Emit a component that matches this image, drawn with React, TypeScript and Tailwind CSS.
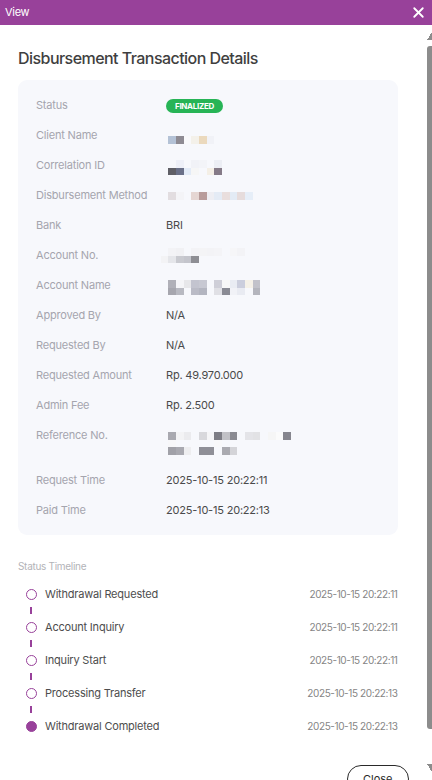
import { X } from "lucide-react";

type Cell = string;

// pixelated redaction blocks, each row is a list of bg classes ("" = empty)
function Mosaic({ rows, offset }: { rows: Cell[][]; offset: string }) {
  return (
    <div className={`-ml-[5.3px] flex flex-col ${offset}`}>
      {rows.map((row, i) => (
        <div key={i} className="flex h-[7.67px]">
          {row.map((c, j) => (
            <span key={j} className={`h-[7.67px] w-[7.67px] shrink-0 ${c}`} />
          ))}
        </div>
      ))}
    </div>
  );
}

const clientName: Cell[][] = [
  ["", "bg-[#b4c2d6]", "bg-[#8e8b93]", "bg-[#f9f9fb]", "bg-[#f4f1ea]", "bg-[#ebd9bd]", "bg-[#f1f2f7]"],
];

const correlationId: Cell[][] = [
  ["", "", "bg-[#eef0f8]", "", "bg-[#f1f2f7]", "bg-[#f3f4f8]", "", "bg-[#eceef4]"],
  ["", "bg-[#5f5f66]", "bg-[#6a7088]", "bg-[#e3ebf7]", "bg-[#f6f6f6]", "", "bg-[#f4efe6]", "bg-[#857a87]"],
];

const disbMethod: Cell[][] = [
  ["", "bg-[#e2dde0]", "bg-[#f4f4f7]", "", "bg-[#e5d6d3]", "bg-[#b89c9b]", "bg-[#eeeef3]", "bg-[#e4ebf5]", "bg-[#e9dedd]", "bg-[#e3ebf5]", "bg-[#e6dcdc]", "bg-[#e6eef8]"],
];

const accountNo: Cell[][] = [
  ["", "bg-[#f3f3f6]", "bg-[#f1f1f4]", "", "bg-[#f3f3f6]", "bg-[#f4f4f6]", "bg-[#f3f3f6]", "bg-[#f4f4f7]", "", "bg-[#f6f6f8]", "bg-[#f3f3f6]"],
  ["bg-[#f3f3f5]", "bg-[#e5e6ea]", "bg-[#c9cad0]", "bg-[#c4c5cc]", "bg-[#8e8e94]"],
];

const accountName: Cell[][] = [
  ["", "bg-[#b0b0b8]", "bg-[#f5f5f8]", "bg-[#e7e7ea]", "bg-[#c3c4cf]", "bg-[#c7c8d2]", "", "bg-[#cfcfd8]", "bg-[#f8f8f8]", "bg-[#e9ecf3]", "bg-[#cbcedd]", "bg-[#f5f1e8]", "bg-[#c2c2ca]"],
  ["", "bg-[#a6a6ae]", "bg-[#b8b9c1]", "", "bg-[#babbc6]", "bg-[#b3b5c0]", "", "bg-[#e0e0e5]", "bg-[#8a8b94]", "bg-[#f1f2f7]", "bg-[#e9ebf2]", "", "bg-[#b4b5bd]"],
];

const referenceNo: Cell[][] = [
  ["", "bg-[#a9a9b0]", "bg-[#f3f3f5]", "bg-[#ebebee]", "", "bg-[#d8d8dc]", "bg-[#f5f5f7]", "bg-[#7d7d85]", "bg-[#c1c1c6]", "bg-[#8a8a92]", "", "bg-[#e4e4e8]", "bg-[#e2e2e5]", "", "bg-[#f6f6f6]", "bg-[#fbfbfb]", "bg-[#86868e]"],
  ["", "bg-[#f7f7f9]", "", "", "", "", "", "bg-[#f8f8fa]", "", "", "", "", "", "", "", "", ""],
  ["", "bg-[#a1a1a8]", "bg-[#a9a9b0]", "bg-[#eeeef0]", "", "bg-[#8f8f97]", "bg-[#8f8f97]", "", "bg-[#aaaab0]", "bg-[#d4d4d8]"],
];

function Row({ label, children, tall }: { label: string; children: React.ReactNode; tall?: boolean }) {
  return (
    <div className={`flex ${tall ? "h-[30px]" : "h-[15px]"}`}>
      <div className="w-[130px] shrink-0 leading-[15px] text-[#a5a5ae]">{label}</div>
      <div className="flex-1 leading-[15px] text-[#4a4a4a]">{children}</div>
    </div>
  );
}

const timeline = [
  { label: "Withdrawal Requested", time: "2025-10-15 20:22:11" },
  { label: "Account Inquiry", time: "2025-10-15 20:22:11" },
  { label: "Inquiry Start", time: "2025-10-15 20:22:11" },
  { label: "Processing Transfer", time: "2025-10-15 20:22:13" },
  { label: "Withdrawal Completed", time: "2025-10-15 20:22:13", done: true },
];

function Scrollbar() {
  return (
    <div className="flex w-[5.5px] shrink-0 flex-col">
      <span className="mt-[7px] h-[8px] w-full bg-[linear-gradient(to_bottom_right,transparent_50%,#8c8c8c_50%)]" />
      <span className="mt-[6px] h-[683px] w-full rounded-tl-[3px] rounded-bl-[3px] bg-[#8c8c8c]" />
      <span className="mt-[35px] h-[8px] w-full bg-[linear-gradient(to_top_right,transparent_50%,#8c8c8c_50%)]" />
    </div>
  );
}

export default function App() {
  return (
    <div className="flex h-[780px] w-[432px] flex-col overflow-hidden bg-white font-['Inter',sans-serif]">
      <div className="flex h-[25px] shrink-0 items-center justify-between bg-[#98419a] pl-[5px] pr-[5px] text-white">
        <span className="text-[11px] leading-none tracking-[-0.3px]">View</span>
        <X className="h-[17px] w-[17px]" strokeWidth={2.6} />
      </div>

      <div className="flex min-h-0 flex-1">
        <div className="min-w-0 flex-1 overflow-hidden">
          <div className="pl-[18px] pr-[29px] pt-[21px]">
            <h1 className="text-[16px] font-medium leading-[24px] tracking-[-0.55px] text-[#3f3f3f]">
              Disbursement Transaction Details
            </h1>

            <div className="mt-[10px] flex flex-col gap-[15px] rounded-[9px] bg-[#f7f8fc] px-[18px] py-[17.5px] text-[11px] tracking-[-0.2px]">
              <Row label="Status">
                <span className="-mt-[0.5px] inline-flex h-[14px] w-[57px] items-center justify-center rounded-full bg-[#27b456] text-[8px] font-bold tracking-[-0.3px] text-white">
                  FINALIZED
                </span>
              </Row>
              <Row label="Client Name">
                <Mosaic rows={clientName} offset="mt-[8.5px]" />
              </Row>
              <Row label="Correlation ID">
                <Mosaic rows={correlationId} offset="mt-[2.5px]" />
              </Row>
              <Row label="Disbursement Method">
                <Mosaic rows={disbMethod} offset="mt-[4.5px]" />
              </Row>
              <Row label="Bank">BRI</Row>
              <Row label="Account No.">
                <Mosaic rows={accountNo} offset="mt-[0.5px]" />
              </Row>
              <Row label="Account Name">
                <Mosaic rows={accountName} offset="mt-[2.5px]" />
              </Row>
              <Row label="Approved By">N/A</Row>
              <Row label="Requested By">N/A</Row>
              <Row label="Requested Amount">Rp. 49.970.000</Row>
              <Row label="Admin Fee">Rp. 2.500</Row>
              <Row label="Reference No." tall>
                <Mosaic rows={referenceNo} offset="mt-[4.5px]" />
              </Row>
              <Row label="Request Time">2025-10-15 20:22:11</Row>
              <Row label="Paid Time">2025-10-15 20:22:13</Row>
            </div>

            <div className="mt-[25px] text-[10px] leading-[12px] tracking-[-0.3px] text-[#b3b3b8]">Status Timeline</div>

            <ul className="mt-[15px] flex flex-col">
              {timeline.map((t, i) => (
                <li key={t.label} className="flex flex-col">
                  {i > 0 && <span className="my-[6px] ml-[12px] h-[7px] w-[2px] bg-[#98419a]" />}
                  <div className="flex h-[14px] items-center">
                    <span
                      className={`ml-[8px] h-[11px] w-[11px] shrink-0 rounded-full border-[1.5px] border-[#98419a] ${
                        t.done ? "bg-[#98419a]" : "bg-white"
                      }`}
                    />
                    <span className="ml-[8px] text-[11px] tracking-[-0.2px] text-[#4d4d4d]">{t.label}</span>
                    <span className="ml-auto text-[10px] tracking-[-0.4px] text-[#858585]">{t.time}</span>
                  </div>
                </li>
              ))}
            </ul>
          </div>

          <div className="mt-[32px] flex justify-end pb-[12px] pr-[18px]">
            <button className="h-[28px] rounded-full border-[1.5px] border-[#2a2a2a] px-[15px] text-[11px] text-[#2a2a2a]">
              Close
            </button>
          </div>
        </div>
        <Scrollbar />
      </div>
    </div>
  );
}
